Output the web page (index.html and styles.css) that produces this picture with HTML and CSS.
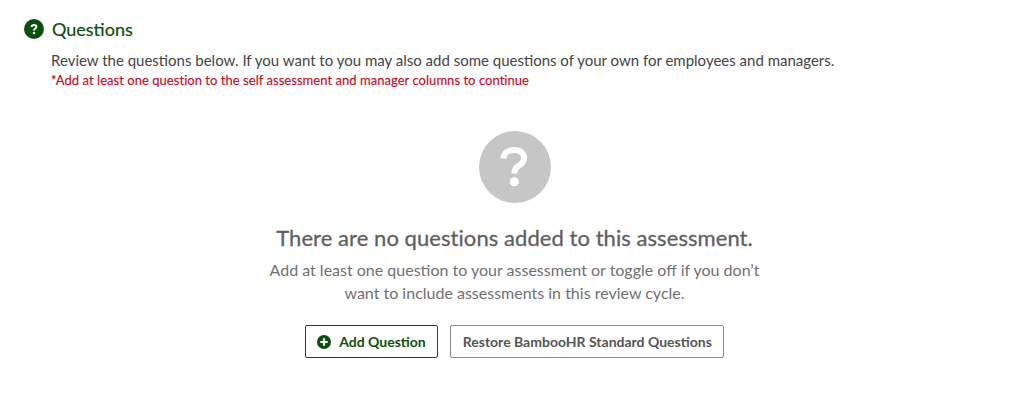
FILE: index.html
```html
<!DOCTYPE html>
<html lang="en">
<head>
<meta charset="utf-8">
<title>Questions</title>
<link rel="stylesheet" href="styles.css">
</head>
<body>
<main class="page">
  <header class="head">
    <svg class="head-icon" viewBox="0 0 20 20" width="20" height="20"><circle cx="10" cy="10" r="10" fill="#0b4f0e"/><path d="M7.600 8c.1-1.300 1-2 2.400-2 1.400 0 2.400.7 2.400 1.800 0 1-.6 1.400-1.200 1.800-.7.500-1.200.8-1.200 1.500v.4" fill="none" stroke="#fff" stroke-width="1.900"/><circle cx="10" cy="14" r="1.250" fill="#fff"/></svg>
    <h1 class="title">Questions</h1>
  </header>
  <p class="intro">Review the questions below. If you want to you may also add some questions of your own for employees and managers.</p>
  <p class="warn">*Add at least one question to the self assessment and manager columns to continue</p>
  <section class="empty">
    <svg class="empty-icon" viewBox="0 0 72 72" width="72" height="72"><circle cx="36" cy="36" r="36" fill="#c6c6c6"/><path d="M24.500 27.500c.3-5.500 4.500-8.500 10.300-8.500 6 0 10.200 3.200 10.200 8 0 3.900-2.200 5.800-5 7.600-2.900 1.900-4.500 3.200-4.500 6.400v1.500" fill="none" stroke="#fff" stroke-width="6"/><circle cx="35.300" cy="50.700" r="4.500" fill="#fff"/></svg>
    <h2 class="empty-title">There are no questions added to this assessment.</h2>
    <p class="empty-text">Add at least one question to your assessment or toggle off if you don’t<br>want to include assessments in this review cycle.</p>
    <div class="actions">
      <button class="btn btn-primary" type="button">
        <svg class="btn-icon" viewBox="0 0 14 14" width="14" height="14"><circle cx="7" cy="7" r="7" fill="#0b4f0e"/><path d="M7 3.300v7.400M3.300 7h7.400" stroke="#fff" stroke-width="2.200"/></svg>
        Add Question
      </button>
      <button class="btn" type="button">Restore BambooHR Standard Questions</button>
    </div>
  </section>
</main>
</body>
</html>
```
FILE: styles.css
```css
html, body { margin: 0; padding: 0; background: #fff; }
body { font-family: Lato, sans-serif; color: #555; overflow: hidden; }
.page { height: 400px; padding: 18px 0 0 24px; box-sizing: border-box; }
.head { display: flex; align-items: center; gap: 8px; height: 22px; }
.title { margin: -1px 0 0; font-size: 18px; font-weight: 400; color: #0b4f0e; line-height: 22px; -webkit-text-stroke: .2px #0b4f0e; }
.intro { margin: 10px 0 0 27px; font-size: 15px; line-height: 20px; color: #444; }
.warn { margin: 3px 0 0 27px; font-size: 13px; line-height: 15px; letter-spacing: .04px; color: #c20b1e; -webkit-text-stroke: .15px #c20b1e; }
.empty { display: flex; flex-direction: column; align-items: center; margin: 43px 0 0 -19px; }
.empty-icon { display: block; }
.empty-title { margin: 22px 0 0; font-size: 22px; font-weight: 400; line-height: 26px; letter-spacing: .06px; color: #5f5f5f; -webkit-text-stroke: .3px #5f5f5f; }
.empty-text { margin: 7px 0 0; font-size: 16px; line-height: 23px; color: #707070; text-align: center; }
.actions { display: flex; gap: 12px; margin-top: 21px; }
.btn { display: flex; align-items: center; gap: 8px; height: 33px; padding: 0 11.500px; background: #fff; border: 1px solid #8a8a8a; border-radius: 2px; font: 700 14px Lato, sans-serif; color: #555; }
.btn-primary { border-color: #0b5a10; color: #0b4f0e; }
.btn-icon { display: block; }
```
